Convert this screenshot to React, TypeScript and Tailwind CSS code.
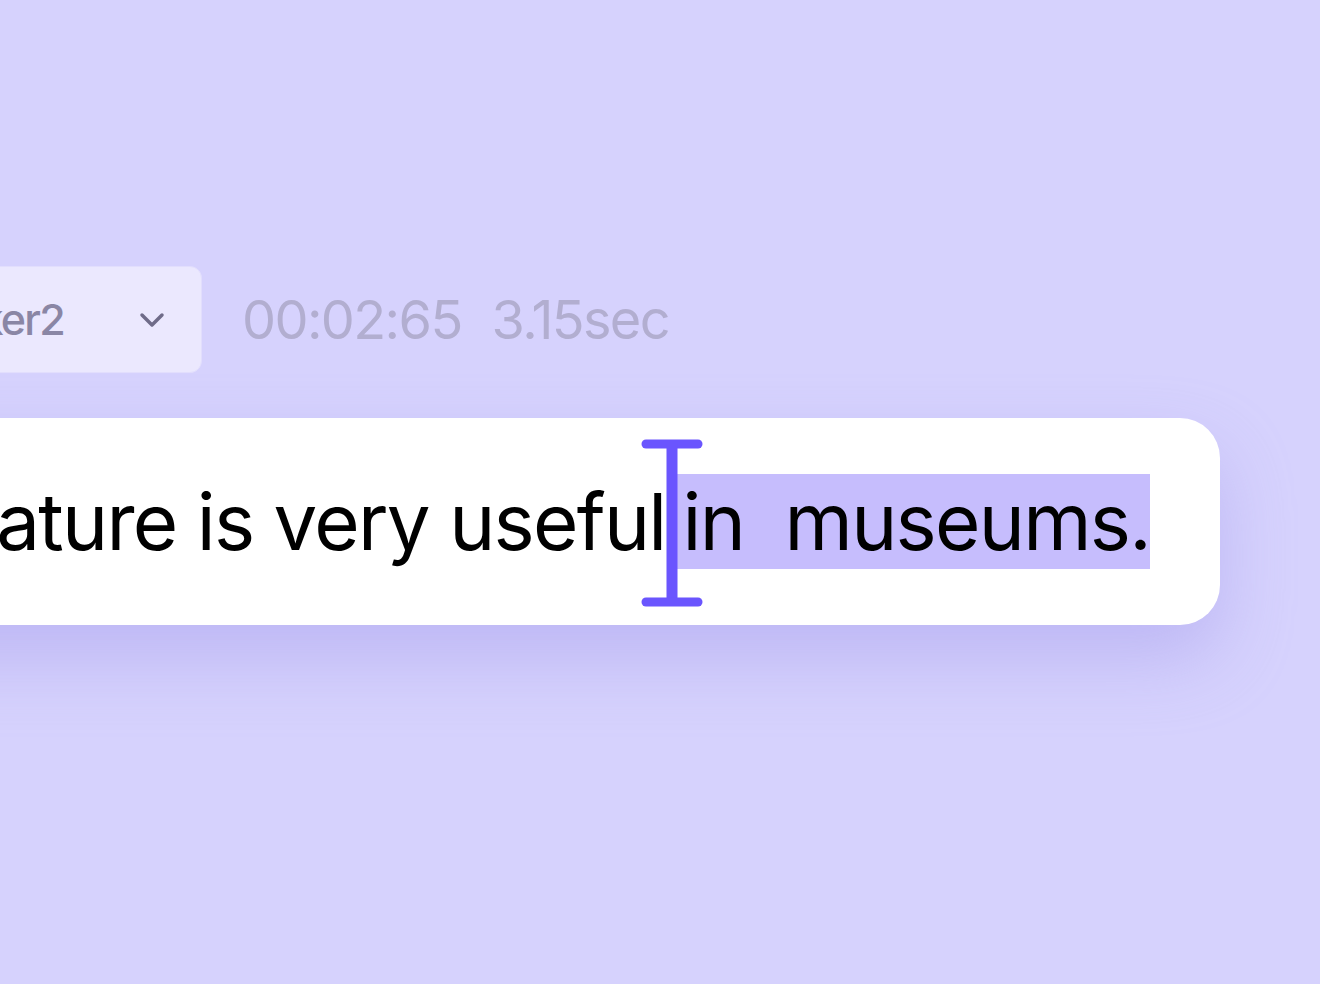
import React from 'react';

// Text cursor drawn as an I-beam with rounded caps
const IBeam = () => (
  <svg
    className="absolute left-[-36px] top-[-36px]"
    width="62"
    height="170"
    viewBox="0 0 62 170"
    fill="none"
  >
    <line x1="5" y1="6" x2="57" y2="6" stroke="#6a55fe" strokeWidth="9" strokeLinecap="round" />
    <line x1="31" y1="6" x2="31" y2="164" stroke="#6a55fe" strokeWidth="11" />
    <line x1="5" y1="164" x2="57" y2="164" stroke="#6a55fe" strokeWidth="9" strokeLinecap="round" />
  </svg>
);

const App = () => {
  return (
    <div
      className="w-[1320px] h-[984px] overflow-hidden bg-[#d6d2fd] pt-[266px]"
      style={{ fontFamily: 'Inter, "Liberation Sans", sans-serif' }}
    >
      {/* speaker picker + timing */}
      <div className="flex items-center">
        <div className="-ml-[118px] w-[320px] h-[107px] flex items-center justify-end gap-[75px] pr-[36px] overflow-hidden rounded-[12px] bg-[#ebe8fe] border border-[#e2defd]">
          <span className="text-[43px] font-medium tracking-[-0.04em] text-[#8a86a5] whitespace-nowrap leading-none">Speaker2</span>
          <svg width="26" height="16" viewBox="0 0 26 16" fill="none" className="shrink-0">
            <path d="M3 3l10 10 10-10" stroke="#6f6b89" strokeWidth="3.5" strokeLinecap="round" strokeLinejoin="round" />
          </svg>
        </div>
        <div className="ml-[40px] flex items-center gap-[30px] text-[54px] tracking-[-0.03em] text-[#b2aed0] leading-none">
          <span>00:02:65</span>
          <span>3.15sec</span>
        </div>
      </div>

      {/* transcript line */}
      <div className="mt-[45px] flex">
        <div className="-ml-[400px] w-[1620px] h-[207px] flex items-center justify-end pr-[70px] bg-white rounded-r-[40px] shadow-[0_34px_70px_rgba(160,150,235,0.45)]">
          <p className="text-[78px] tracking-[-0.022em] text-black whitespace-pre leading-none">
            <span>This feature is very useful</span>
            <span className="relative ml-[11px] pl-[6px] bg-[#c6bdfd]">
              {'in  museums.'}
              <IBeam />
            </span>
          </p>
        </div>
      </div>
    </div>
  );
};

export default App;
